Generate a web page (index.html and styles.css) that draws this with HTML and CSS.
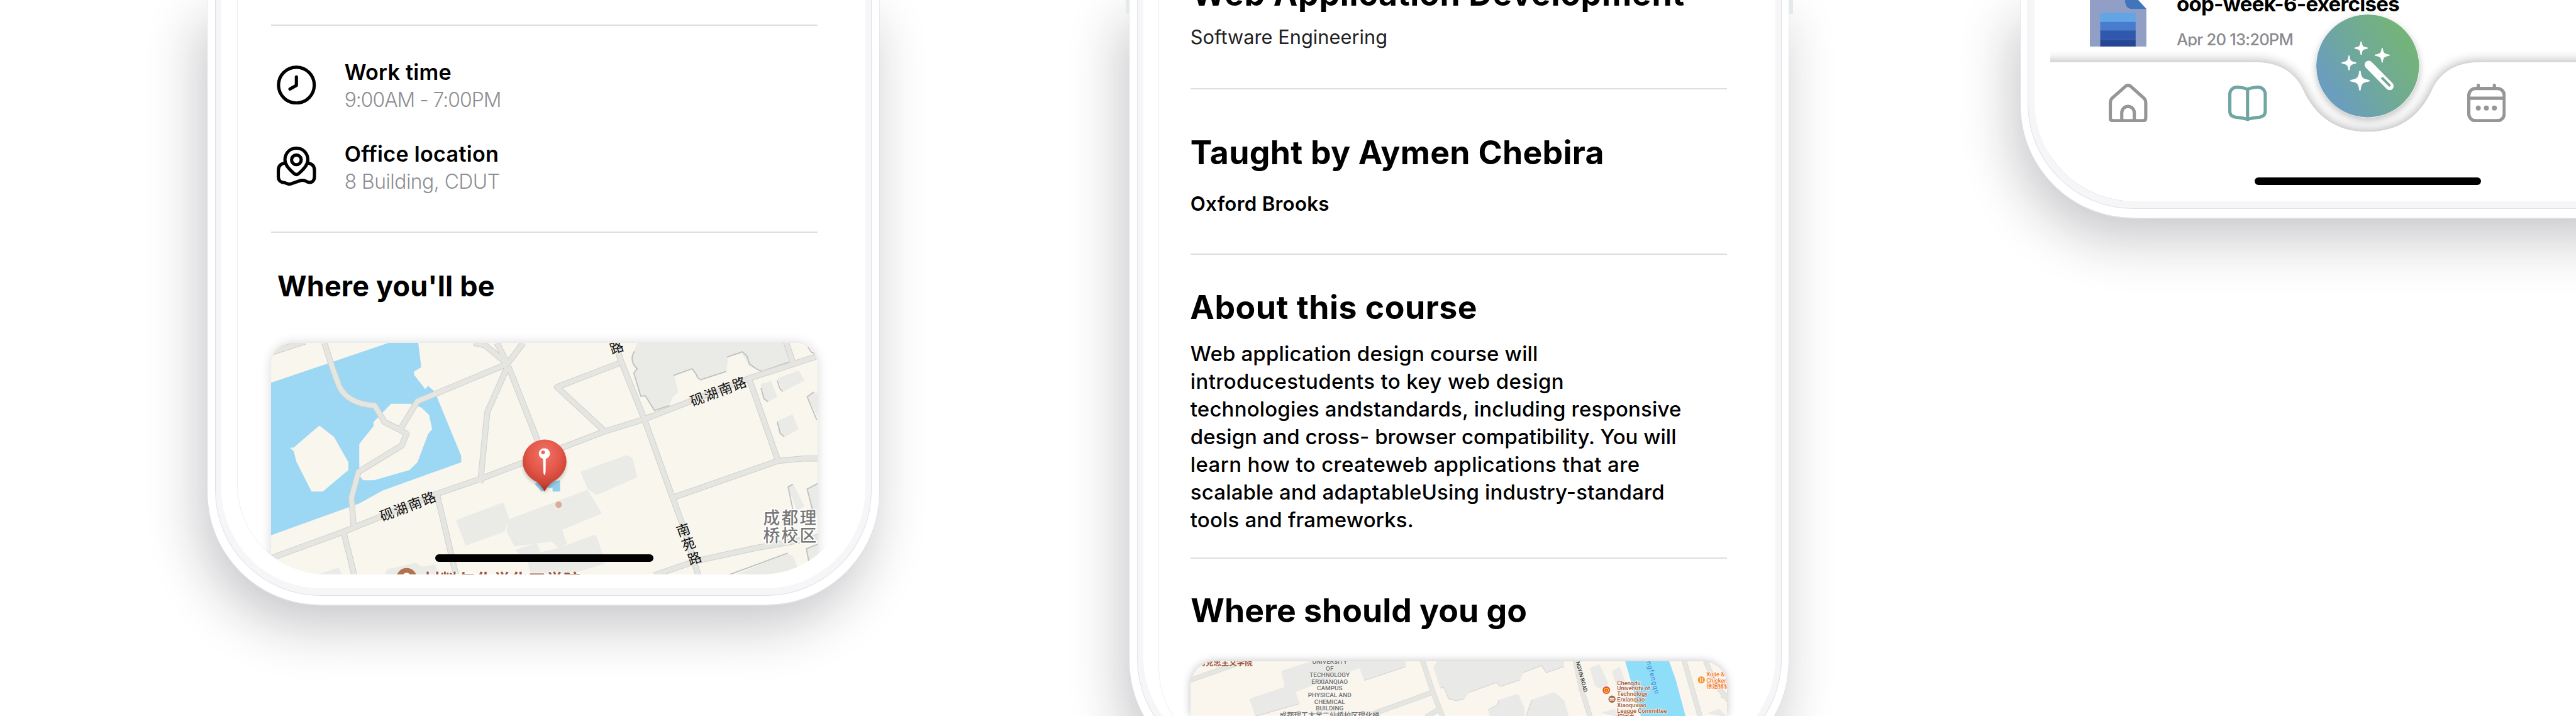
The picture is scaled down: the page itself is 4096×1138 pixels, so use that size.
FILE: index.html
```html
<!DOCTYPE html>
<html lang="en">
<head>
<meta charset="utf-8">
<title>Campus app screens</title>
<link rel="stylesheet" href="styles.css">
</head>
<body>
<main class="board">

  <section class="phone phone-office">
    <div class="bezel"><div class="face"><div class="screen">
      <hr class="rule">
      <ul class="info">
        <li class="info-row">
          <svg class="info-icon" viewBox="0 0 110 110"><g fill="none" stroke="#000" stroke-width="9" stroke-linecap="round" stroke-linejoin="round"><circle cx="55" cy="55" r="50"/><path d="M55 32v24L37 66"/></g></svg>
          <div class="info-body"><h3 class="info-title">Work time</h3><p class="info-text hours">9:00AM - 7:00PM</p></div>
        </li>
        <li class="info-row">
          <svg class="info-icon" viewBox="0 0 110 110"><g fill="none" stroke="#000" stroke-width="9" stroke-linecap="round" stroke-linejoin="round"><path d="M55 4.500C36 4.500 23 19 23 37C23 50 32 60 48 75Q55 81.500 62 75C78 60 87 50 87 37C87 19 74 4.500 55 4.500Z"/><circle cx="55" cy="37" r="13.500"/><path d="M22 46C11 48 4.500 55 4.500 66V84C4.500 97 13 100 22 101L32 104.500Q36 105.500 40 104L66 95Q72 93 78 95L88 99.500C98 102 105.500 96 105.500 84V66C105.500 55 99 48 88 46"/></g></svg>
          <div class="info-body"><h3 class="info-title">Office location</h3><p class="info-text">8 Building, CDUT</p></div>
        </li>
      </ul>
      <hr class="rule">
      <h2 class="place-title">Where you'll be</h2>
      <div class="map">
        <svg viewBox="757 958 1528 647" preserveAspectRatio="none">
          <defs>
            <radialGradient id="pin" cx=".5" cy=".28" r=".72"><stop offset="0" stop-color="#ee7466"/><stop offset=".5" stop-color="#e4574a"/><stop offset=".8" stop-color="#c94436"/><stop offset="1" stop-color="#a4281f"/></radialGradient>
            <filter id="soft" x="-40%" y="-40%" width="180%" height="180%"><feGaussianBlur stdDeviation="18"/></filter>
            <g id="streets">
              <path class="way" d="M190 107L210 230L228 330C245 400 280 425 320 430L345 515L385 555L402 575L390 635L278 772L260 905L265 1045"/>
              <path class="way" d="M385 555L430 408L662 215M575 107L605 120L662 215M635 107L662 215L703 107M662 230L610 465L592 830M665 230L740 610"/>
              <path class="way" d="M40 165L140 100M950 212L790 335L912 560M940 107L955 200L1015 500L1088 905L1115 1050L1155 1310M1088 905L1360 715L1425 703H1470M1285 290L1360 715M1380 100L1398 205M480 885L500 1050L530 1310M240 1085L268 1310"/>
              <path class="way" d="M45 1222L240 1080L480 885L592 808L760 680L910 565L1015 500L1285 290L1470 170M1040 1305L1150 1230L1300 1165L1470 1105"/>
            </g>
          </defs>
          <rect x="757" y="958" width="1528" height="647" fill="#f9f6ee"/>
          <g transform="translate(700 900) scale(1.0842 .5421)">
            <path fill="#9cd8f3" d="M50 314L355 107H432L440 232L421 255V270L450 345L458 328L475 360L543 690V722L340 868L280 935L50 1100Z"/>
            <path fill="#f9f6ee" d="M177 533L215 592L252 722V762L186 873H157L118 720L111 665L101 648L111 646ZM362 421H412L440 440L460 478L468 552L458 575L430 722L410 762L318 815H290L280 790V628L317 535V515Z"/>
            <g fill="#eaebe7" stroke="#eaebe7" stroke-width="5" stroke-linejoin="round">
              <path d="M1000 107L983 180L988 225L997 240L990 260L1008 380L1020 378L1042 450L1078 428L1086 385L1100 360L1090 275L1138 242L1160 295L1225 253L1228 182L1268 156L1288 226L1320 250L1386 205L1376 107Z"/>
              <path d="M1362 290L1412 253L1426 300L1373 355ZM1318 320L1340 306L1355 385L1335 407L1322 390ZM1360 510L1396 480L1411 550L1378 588L1364 570ZM1437 385L1452 363L1470 375V505ZM1387 845L1398 838L1425 950L1410 965ZM1437 860L1470 830V1010L1450 975Z"/>
              <path d="M853 772L970 688L982 700L995 798L892 888L872 860ZM667 1018L868 868L903 985L800 1070L813 1140L795 1163L778 1128L682 1153L662 1080ZM532 1022L650 933L664 1010L653 1078L556 1148Z"/>
              <path d="M685 1175L736 1140L746 1190L795 1165L888 1099L910 1220V1245L800 1310H725L718 1240ZM355 1275L425 1243L440 1264L473 1252L485 1310H345ZM165 1310L225 1268L235 1310ZM1245 1310L1383 1193L1398 1210L1408 1270L1380 1310ZM1434 1168L1470 1145V1230L1440 1238Z"/>
            </g>
            <path class="edge" d="M990 150C980 180 982 215 997 240L988 262L1006 382L1018 380L1041 455L1080 430M1090 275L1138 240L1148 265L1152 285L1160 297L1225 255M1228 180L1268 153L1280 175L1286 215L1300 235L1312 250L1320 253L1388 205M1358 300L1364 340L1372 358M1358 515L1366 575L1376 590M1316 340L1324 395L1334 410M1452 360L1435 385L1460 505M1398 835L1386 850L1398 965M1462 832L1435 860L1450 975M1235 1301L1385 1190M1462 1145L1433 1168L1440 1240M1437 128L1446 155L1460 165"/>
            <use href="#streets" class="street-casing"/>
            <use href="#streets" class="street"/>
          </g>
          <circle cx="1561" cy="1410" r="9" fill="#d9ad98"/>
          <g class="street-name">
            <text transform="translate(1141 1414) rotate(-21)" y="14" text-anchor="middle">砚湖南路</text>
            <text transform="translate(2009 1093) rotate(-21)" y="14" text-anchor="middle">砚湖南路</text>
            <text transform="translate(1725 970) rotate(-19)" y="14" text-anchor="middle">路</text>
            <text transform="translate(1911 1480) rotate(-19)" y="14" text-anchor="middle">南</text>
            <text transform="translate(1926 1519) rotate(-19)" y="14" text-anchor="middle">苑</text>
            <text transform="translate(1943 1559) rotate(-19)" y="14" text-anchor="middle">路</text>
          </g>
          <g class="district"><text x="2133" y="1465">成都理</text><text x="2133" y="1513">桥校区</text></g>
          <circle cx="1136" cy="1616" r="29" fill="#b0734e"/><circle cx="1136" cy="1611" r="11" fill="#fff"/>
          <text class="poi" x="1182" y="1640">材料与化学化工学院</text>
          <g transform="translate(1420 1200) scale(.3333)">
            <path fill="#93cdea" d="M222 455L255 440L310 510L280 520ZM340 445L435 425V520H372V490H330Z"/>
            <path fill="#000" opacity=".3" filter="url(#soft)" d="M131 298A174 174 0 0 1 479 298C479 360 440 415 370 450Q335 478 305 528Q275 478 240 450C170 415 131 360 131 298Z"/>
            <path fill="url(#pin)" d="M121 268A184 184 0 0 1 489 268C489 340 440 405 370 440Q335 468 305 518Q275 468 240 440C170 405 121 340 121 268Z"/>
            <path fill="#fff" d="M304 158a44 44 0 0 1 11 87L314 345Q312 382 304 382T295 345L292 245A44 44 0 0 1 304 158Z"/>
            <circle cx="292" cy="192" r="16" fill="#e8695c"/>
          </g>
        </svg>
      </div>
      <div class="home-bar"></div>
    </div></div></div>
  </section>

  <section class="phone phone-course">
    <div class="side-button left"></div><div class="side-button right"></div>
    <div class="bezel"><div class="face"><div class="screen">
      <h2 class="heading course-title">Web Application Development</h2>
      <p class="subject">Software Engineering</p>
      <hr class="rule">
      <h2 class="heading teacher">Taught by Aymen Chebira</h2>
      <p class="school">Oxford Brooks</p>
      <hr class="rule">
      <h2 class="heading about">About this course</h2>
      <p class="summary">Web application design course will<br><span class="open">introducestudents to key web design</span><br>technologies andstandards, including responsive<br><span class="tight">design and cross- browser compatibility. You will</span><br><span class="open">learn how to createweb applications that are</span><br>scalable and adaptableUsing industry-standard<br>tools and frameworks.</p>
      <hr class="rule">
      <h2 class="heading where">Where should you go</h2>
      <div class="map">
        <svg viewBox="3326 1848 1504 152" preserveAspectRatio="none">
          <defs>
            <g id="lanes"><path class="way" d="M60 315L190 172L240 115M690 135L718 400L744 610M716 405L540 606M736 545L700 610M1097 140L1114 380L1137 610M1387 135L1430 610M1444 140L1470 330L1510 490M1485 430H1510"/></g>
          </defs>
          <rect x="3326" y="1848" width="1504" height="152" fill="#faf5ed"/>
          <g transform="translate(3250 1800) scale(1.0523 .3333)">
            <g fill="#e9eae7" stroke="#e9eae7" stroke-width="5" stroke-linejoin="round">
              <path d="M400 142H643V190L537 300L524 195L460 270L350 400L360 500L247 605L232 460L325 360L317 225Z"/>
              <path d="M732 142H1065V190L1020 236L1008 180L956 240L948 300L898 351L887 322L812 405L800 458L780 472L762 458L749 360L740 370L722 200Z"/>
              <path d="M867 550L892 510L895 470L943 421L960 540V610H872ZM967 610L982 470L1040 408L1065 470L1078 610ZM1138 200L1160 173L1183 330L1165 372L1152 350ZM1197 225L1215 198L1245 480L1215 400ZM1170 575L1200 548L1210 610ZM1452 580L1480 548L1500 610Z"/>
            </g>
            <path class="edge faint" d="M958 240L1008 178L1020 240L1067 190M815 405L887 322L898 356L950 300M738 368L747 362L760 460L780 475L800 460M535 305L645 190M362 500L245 605M893 470L890 510L866 550M982 470L966 600"/>
            <path fill="#8fdef9" d="M1230 142H1347L1365 300L1391 605H1272Z"/>
            <use href="#lanes" class="street-casing lane"/><use href="#lanes" class="street lane"/>
          </g>
          <text class="poi small" x="3500" y="1860" text-anchor="end">大学马克思主义学院</text>
          <g class="campus" text-anchor="middle">
            <text x="3716" y="1855">UNIVERSITY</text><text x="3716" y="1873.700">OF</text><text x="3716" y="1892.500">TECHNOLOGY</text><text x="3716" y="1911">ERXIANQIAO</text><text x="3716" y="1929.700">CAMPUS</text><text x="3716" y="1948.300">PHYSICAL AND</text><text x="3716" y="1967">CHEMICAL</text><text x="3716" y="1985.700">BUILDING</text><text class="cjk" x="3716" y="2006">成都理工大学二仙桥校区理化楼</text>
          </g>
          <text class="lane-name" transform="translate(4429 1935) rotate(75)" text-anchor="end">NGYIN ROAD</text>
          <text class="river-name" transform="translate(4629 1942) rotate(75)" text-anchor="end">ngfengqu</text>
          <g class="poi-list">
            <text x="4522" y="1914.300">Chengdu</text><text x="4522" y="1929.700">University of</text><text x="4522" y="1945.200">Technology</text><text x="4522" y="1960.700">Erxianqiao</text><text x="4522" y="1976">Xiaoquxiao</text><text x="4522" y="1991.700">League Committee</text><text x="4522" y="2008">校团委</text>
          </g>
          <g class="poi-list food"><text x="4772" y="1891">Xujie &amp;</text><text x="4772" y="1907">Chicken</text><text x="4772" y="1923">徐姐钵钵</text></g>
          <circle cx="4491.700" cy="1929" r="10.500" fill="#e5432f"/><circle cx="4491.700" cy="1929" r="6" fill="none" stroke="#ffd22e" stroke-width="2.500"/><circle cx="4491.700" cy="1929" r="2" fill="#ffd22e"/>
          <circle cx="4507.500" cy="1954" r="10" fill="#a5694a"/><path d="M4501 1950h13v8h-13z" fill="#fff"/><path d="M4501 1954h13" stroke="#a5694a" stroke-width="1.500"/>
          <circle cx="4758" cy="1900" r="10" fill="#f79a35"/><path d="M4755 1894v12M4761 1894v12" stroke="#fff" stroke-width="2"/>
        </svg>
      </div>
    </div></div></div>
  </section>

  <section class="phone phone-files">
    <div class="bezel"><div class="face">
      <div class="file">
        <svg class="file-icon" viewBox="0 0 158 130" preserveAspectRatio="none"><path fill="#919fc6" d="M0 0H136L158 25V130H0Z"/><path fill="#4175bb" d="M98 0H134L158 25H118Q99 25 98 0Z"/><path fill="#62a5e4" d="M29 36h99v25H29z"/><path fill="#487ccf" d="M29 61h99v24H29z"/><path fill="#3059ae" d="M29 85h99v27H29z"/><path fill="#264592" d="M29 112h99v18H29z"/></svg>
        <div class="file-text"><h3 class="file-name">oop-week-6-exercises</h3><p class="file-date">Apr 20 13:20PM</p></div>
      </div>
      <nav class="tabs">
        <svg class="tabs-shape" viewBox="5730 120 1470 440" preserveAspectRatio="none">
          <defs><filter id="lift" x="-5%" y="-20%" width="110%" height="140%"><feGaussianBlur stdDeviation="17"/></filter></defs>
          <path fill="#000" opacity=".36" filter="url(#lift)" d="M5600 174H6304C6370 174 6413 202 6436 249C6470 325 6530 368.500 6617 368.500C6704 368.500 6764 325 6798 249C6821 202 6864 174 6930 174H7700V900H5600Z"/>
          <path fill="#fff" d="M5600 174H6304C6370 174 6413 202 6436 249C6470 325 6530 368.500 6617 368.500C6704 368.500 6764 325 6798 249C6821 202 6864 174 6930 174H7700V900H5600Z"/>
        </svg>
        <div class="tab-list">
          <svg class="tab" viewBox="0 0 108 108"><g fill="none" stroke="#969696" stroke-width="9"><path d="M4.500 52Q4.500 46 9 41L46 8Q54 1 62 8L99 41Q103.500 46 103.500 52V96Q103.500 103.500 96 103.500H12Q4.500 103.500 4.500 96Z"/><path d="M36.500 103V81a17.500 17.500 0 0 1 35 0v22"/></g></svg>
          <svg class="tab" viewBox="0 0 108 108"><path fill="none" stroke="#70a6a2" stroke-width="9" stroke-linejoin="round" d="M54 16C47 12 38 11 30 10C14 8 4.500 17 4.500 30V76C4.500 87 9 91 20 93.500C32 95 44 96 54 100C64 96 76 95 88 93.500C99 91 103.500 87 103.500 76V30C103.500 17 94 8 78 10C70 11 61 12 54 16ZM54 16V100"/></svg>
          <svg class="tab calendar" viewBox="0 0 108 108"><g fill="none" stroke="#969696" stroke-width="9"><rect x="4.500" y="13.500" width="99" height="90" rx="19"/><path d="M4.500 40.600h99"/><path stroke-linecap="round" d="M31 4.500V13M76 4.500V13"/></g><g fill="#969696"><circle cx="31" cy="68" r="7"/><circle cx="53.500" cy="68" r="7"/><circle cx="76" cy="68" r="7"/></g></svg>
        </div>
        <svg class="wand" viewBox="44 62 862 862">
          <defs>
            <linearGradient id="fab" x1=".12" y1=".72" x2=".86" y2=".24"><stop offset="0" stop-color="#6b9dbf"/><stop offset=".45" stop-color="#6fa89c"/><stop offset="1" stop-color="#74b37a"/></linearGradient>
            <path id="spark" stroke-width="17" stroke-linejoin="round" d="M0-91C5-34 18-10 91 0C18 10 5 34 0 91C-5 34-18 10-91 0C-18-10-5-34 0-91Z"/>
          </defs>
          <circle cx="475" cy="493" r="431" fill="url(#fab)"/>
          <g fill="#fff" stroke="#fff">
            <use href="#spark" transform="translate(420 344) scale(.57)"/><use href="#spark" transform="translate(597 404) scale(.63)"/><use href="#spark" transform="translate(318 468) scale(.63)"/><use href="#spark" transform="translate(410 617) scale(.83)"/>
            <path stroke-width="69" stroke-linecap="round" d="M484 484L659 662"/>
          </g>
          <path fill="#6fa992" d="M585 597L601 584L669 653Q669 667 656 669Z"/>
        </svg>
      </nav>
      <div class="home-bar"></div>
    </div></div>
  </section>

</main>
</body>
</html>
```
FILE: styles.css
```css
/* 1rem = 100 design units */
html { font-size: 56.8889px; }
* { box-sizing: border-box; margin: 0; padding: 0; }
body { width: 4096px; height: 1138px; overflow: hidden; background: #fff; color: #000; font-family: Inter, "Noto Sans CJK SC", sans-serif; }
svg { display: block; }
ul { list-style: none; }

.board { display: flex; align-items: flex-start; height: 1138px; overflow: hidden; }
.phone { position: relative; flex: none; padding: 0 .205rem .25rem; background: #fff; border-radius: 0 0 3.15rem 3.15rem; box-shadow: 0 .02rem 0 .01rem #e0e0e5, -.2rem .6rem 1.5rem rgba(20, 22, 32, .24); }
.bezel { height: 100%; padding: 0 .16rem .18rem; background: #f6f6f8; border: .03rem solid #e0e0e6; border-top: 0; border-radius: 0 0 2.95rem 2.95rem; }
.face { position: relative; height: 100%; background: #fff; border-radius: 0 0 2.78rem 2.78rem; overflow: hidden; }
.screen { position: relative; height: 100%; overflow: hidden; border-radius: 0 0 2.5rem 2.5rem; box-shadow: inset .02rem 0 0 #f0f0f2; }

.phone-office { width: 18.77rem; height: 16.89rem; margin-left: 5.8rem; }
.phone-course { width: 18.43rem; height: 21.6rem; margin-left: 7rem; }
.phone-files { width: 19.39rem; height: 6.08rem; margin-left: 6.475rem; }

.rule { border: 0; height: .04rem; background: #dedede; }
.home-bar { position: absolute; background: #000; border-radius: .11rem; }
.map svg { width: 100%; height: 100%; border-radius: inherit; }

/* office screen */
.phone-office .face { padding: 0 .41rem .39rem .44rem; }
.phone-office .screen { padding: .68rem .92rem 0 .96rem; }
.info { display: flex; flex-direction: column; gap: .808rem; padding: .922rem 0 1.078rem .155rem; }
.info-row { display: flex; align-items: center; gap: .79rem; }
.info-icon { width: 1.1rem; height: 1.1rem; }
.info-body { padding-top: .03rem; margin-bottom: -.03rem; }
.info-title { font-size: .6rem; line-height: 1.2; font-weight: 600; letter-spacing: .005rem; }
.info-text { margin-top: .078rem; font-size: .56rem; line-height: 1.2; font-weight: 300; letter-spacing: -.009rem; color: #8e8e93; }
.hours { letter-spacing: -.0175rem; }
.place-title { margin: 1.01rem 0 1.112rem .17rem; font-size: .79rem; line-height: 1.2; font-weight: 700; letter-spacing: .003rem; }
.phone-office .map { height: 6.47rem; border-radius: .62rem .62rem 0 0; box-shadow: 0 0 .3rem rgba(0, 0, 0, .16); }
.phone-office .home-bar { left: 5.55rem; bottom: .35rem; width: 6.1rem; height: .22rem; }

/* map drawing */
.way { vector-effect: non-scaling-stroke; }
.street-casing, .street { fill: none; stroke-linejoin: round; }
.street-casing { stroke: #d0d1cb; stroke-width: 9.6px; }
.street { stroke: #e5e6e1; stroke-width: 7.6px; }
.street-casing.lane { stroke: #d6d7d2; stroke-width: 8px; }
.street.lane { stroke-width: 6.6px; }
.edge { fill: none; stroke: #bfc0c0; stroke-width: 1.8px; stroke-linejoin: round; vector-effect: non-scaling-stroke; }
.faint { stroke: #cfd0cf; stroke-width: 1px; }
text { font-family: Roboto, "Noto Sans CJK SC", sans-serif; }
.street-name text { font-size: 38px; letter-spacing: 4px; fill: #111; }
.district text { font-size: 47px; letter-spacing: 4px; font-weight: 500; fill: #777; stroke: #fff; stroke-width: 6px; paint-order: stroke; }
.poi { font-size: 49px; font-weight: 700; fill: #a0583a; stroke: #fff; stroke-width: 4px; paint-order: stroke; }
.poi.small { font-size: 22px; stroke-width: 2px; }
.campus text { font-size: 17.5px; font-weight: 500; fill: #6d7074; stroke: #f6f4ee; stroke-width: 2px; paint-order: stroke; }
.campus .cjk { font-size: 20px; }
.lane-name { font-size: 15px; font-weight: 500; fill: #333; }
.river-name { font-size: 19px; letter-spacing: 2px; fill: #4189cf; }
.poi-list text { font-size: 16.5px; font-weight: 500; fill: #a5552d; stroke: #fff; stroke-width: 2px; paint-order: stroke; }
.poi-list.food text { fill: #f4731c; }

/* course screen */
.phone-course .face { padding: 0 .1rem 0 .43rem; }
.phone-course .screen { padding: 0 1.25rem 0 .89rem; }
.side-button { position: absolute; top: 0; width: .11rem; height: .38rem; background: #e6e9ec; }
.side-button.left { left: -.11rem; }
.side-button.right { right: -.11rem; }
.heading { font-size: .91rem; line-height: 1.2; font-weight: 700; white-space: nowrap; }
.course-title { margin: -.717rem 0 .345rem .04rem; letter-spacing: .0125rem; }
.subject { margin-bottom: 1.092rem; font-size: .54rem; line-height: 1.2; font-weight: 400; letter-spacing: .001rem; color: #222; }
.teacher { margin: 1.203rem 0 .581rem 0; letter-spacing: .005rem; }
.school { margin-bottom: 1.049rem; font-size: .55rem; line-height: 1.2; font-weight: 600; letter-spacing: .005rem; }
.about { margin: .908rem 0 .395rem -.01rem; letter-spacing: .009rem; }
.summary { margin-bottom: .651rem; font-size: .58rem; line-height: .772rem; font-weight: 500; letter-spacing: .003rem; white-space: nowrap; }
.summary .open { letter-spacing: .0065rem; }
.summary .tight { letter-spacing: 0; }
.where { margin: .9rem 0 .873rem .01rem; }
.phone-course .map { height: 1.52rem; border-radius: .68rem .68rem 0 0; box-shadow: 0 0 .25rem rgba(0, 0, 0, .25); }

/* files screen */
.file { display: flex; gap: .84rem; height: 1.295rem; padding-left: 1.56rem; overflow: hidden; }
.file-icon { width: 1.58rem; height: 1.3rem; }
.file-text { white-space: nowrap; }
.file-name { margin-top: -.253rem; font-size: .58rem; line-height: .708rem; font-weight: 700; letter-spacing: -.012rem; }
.file-date { margin-top: .38rem; font-size: .45rem; line-height: 1.2; font-weight: 500; letter-spacing: -.014rem; color: #8a8a8e; }
.tabs { position: absolute; top: 1.2rem; left: .44rem; width: 14.7rem; height: 4.4rem; }
.tabs-shape { position: absolute; inset: 0; width: 100%; height: 100%; overflow: hidden; }
.tab-list { position: relative; display: flex; gap: 2.26rem; padding: 1.13rem 0 0 1.65rem; }
.tab { flex: none; width: 1.08rem; height: 1.08rem; }
.calendar { margin-left: 3.33rem; }
.wand { position: absolute; top: -.793rem; left: 7.447rem; width: 2.873rem; height: 2.873rem; border-radius: 50%; box-shadow: 0 .08rem .2rem rgba(0, 0, 0, .25); }
.phone-files .home-bar { left: 6.16rem; top: 4.95rem; width: 6.33rem; height: .225rem; }
```
